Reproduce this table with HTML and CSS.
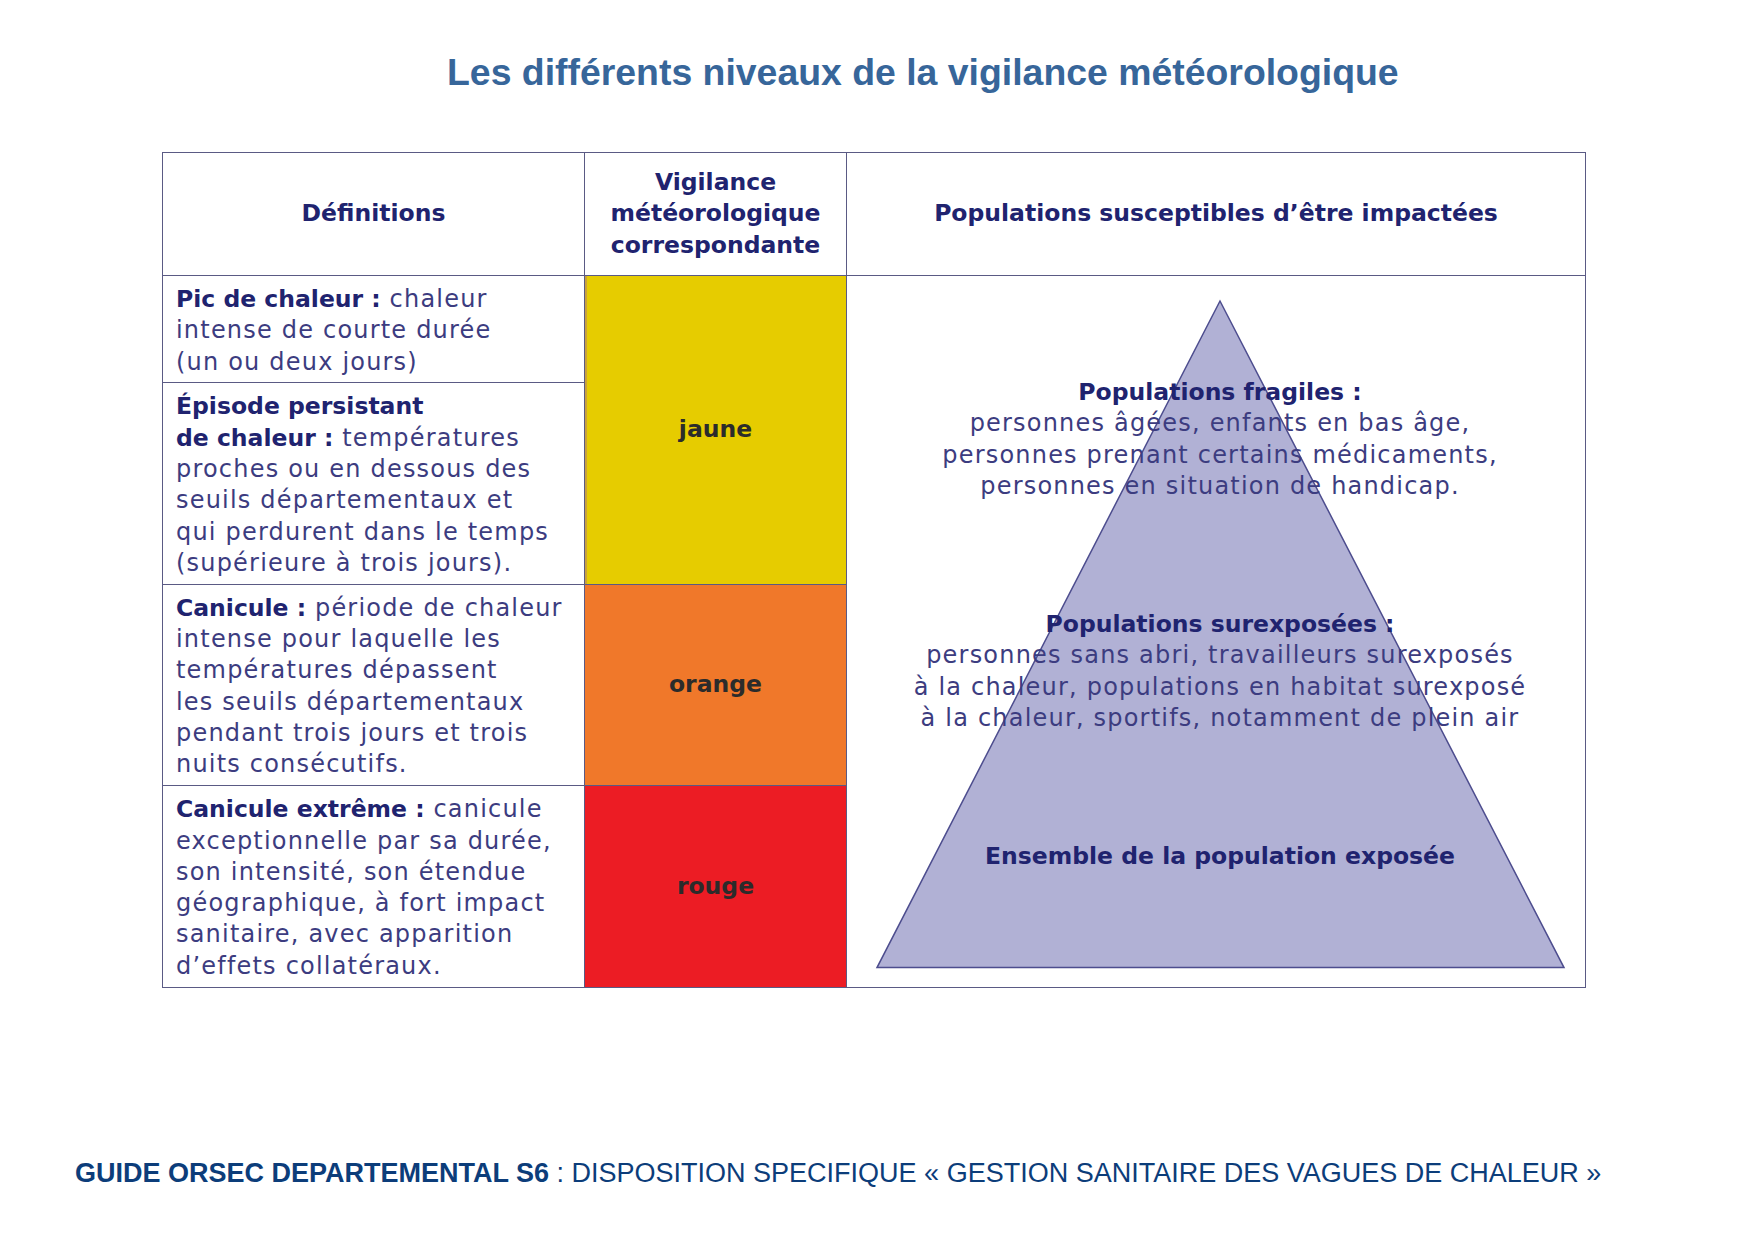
FILE: index.html
```html
<!DOCTYPE html>
<html lang="fr">
<head>
<meta charset="utf-8">
<title>Vigilance météorologique</title>
<link rel="stylesheet" href="styles.css">
</head>
<body>
<div class="page">
  <h1 class="title">Les différents niveaux de la vigilance météorologique</h1>

  <table class="vig">
    <colgroup>
      <col class="c-def">
      <col class="c-vig">
      <col class="c-pop">
    </colgroup>
    <thead>
      <tr>
        <th>Définitions</th>
        <th>Vigilance<br>météorologique<br>correspondante</th>
        <th>Populations susceptibles d’être impactées</th>
      </tr>
    </thead>
    <tbody>
      <tr>
        <td class="def"><b>Pic de chaleur :</b> chaleur<br>intense de courte durée<br>(un ou deux jours)</td>
        <td class="lvl jaune" rowspan="2">jaune</td>
        <td class="pyr" rowspan="4">
          <svg class="pyr-shape" viewBox="0 0 738 710" preserveAspectRatio="none" aria-hidden="true">
            <polygon points="373,25 30,691 717,691" />
          </svg>
          <div class="pyr-text">
            <p><b>Populations fragiles :</b><br>personnes âgées, enfants en bas âge,<br>personnes prenant certains médicaments,<br>personnes en situation de handicap.</p>
            <p><b>Populations surexposées :</b><br>personnes sans abri, travailleurs surexposés<br>à la chaleur, populations en habitat surexposé<br>à la chaleur, sportifs, notamment de plein air</p>
            <p><b>Ensemble de la population exposée</b></p>
          </div>
        </td>
      </tr>
      <tr>
        <td class="def"><b>Épisode persistant<br>de chaleur :</b> températures<br>proches ou en dessous des<br>seuils départementaux et<br>qui perdurent dans le temps<br>(supérieure à trois jours).</td>
      </tr>
      <tr>
        <td class="def"><b>Canicule :</b> période de chaleur<br>intense pour laquelle les<br>températures dépassent<br>les seuils départementaux<br>pendant trois jours et trois<br>nuits consécutifs.</td>
        <td class="lvl orange">orange</td>
      </tr>
      <tr>
        <td class="def"><b>Canicule extrême :</b> canicule<br>exceptionnelle par sa durée,<br>son intensité, son étendue<br>géographique, à fort impact<br>sanitaire, avec apparition<br>d’effets collatéraux.</td>
        <td class="lvl rouge">rouge</td>
      </tr>
    </tbody>
  </table>

  <p class="footer"><b>GUIDE ORSEC DEPARTEMENTAL S6</b> : DISPOSITION SPECIFIQUE « GESTION SANITAIRE DES VAGUES DE CHALEUR »</p>
</div>
</body>
</html>
```

FILE: styles.css
```css
html, body {
  margin: 0;
  padding: 0;
  background: #ffffff;
}

.page {
  width: 1755px;
  height: 1240px;
  display: flex;
  flex-direction: column;
  box-sizing: border-box;
}

.title {
  margin: 0;
  padding: 52px 0 0 447px;
  font-family: "Liberation Sans", Arial, sans-serif;
  font-weight: bold;
  font-size: 37.4px;
  line-height: 40px;
  color: #37669a;
  white-space: nowrap;
}

.vig {
  margin: 60px 0 0 162px;
  border-collapse: collapse;
  table-layout: fixed;
  width: 1423px;
  font-family: "DejaVu Sans", Verdana, sans-serif;
  font-size: 24px;
  letter-spacing: 1.2px;
  line-height: 31.3px;
  color: #3c3c80;
}

.c-def { width: 422px; }
.c-vig { width: 262px; }
.c-pop { width: 739px; }

.vig th,
.vig td {
  border: 1.5px solid #5a5a84;
  padding: 0;
  vertical-align: middle;
}

.vig th {
  height: 122px;
  font-size: 23.5px;
  letter-spacing: 0;
  font-weight: bold;
  color: #20236f;
  text-align: center;
}

.vig td.def {
  padding: 8px 10px 4.6px 13px;
  white-space: nowrap;
  vertical-align: top;
}

.vig b {
  font-size: 23.5px;
  letter-spacing: 0;
  font-weight: bold;
  color: #20236f;
}

.lvl {
  text-align: center;
  font-weight: bold;
  font-size: 23.5px;
  letter-spacing: 0;
  color: #2b2b2b;
}

.jaune { background: #e6cc00; box-shadow: inset 2px 0 0 #c9a23a; }
.orange { background: #f0782a; }
.rouge { background: #ec1c24; }

.vig td.pyr {
  position: relative;
  vertical-align: top;
}

.pyr-shape {
  position: absolute;
  left: 0;
  top: 0;
  width: 100%;
  height: 100%;
}

.pyr-shape polygon {
  fill: #b1b1d5;
  stroke: #4d4d8e;
  stroke-width: 1.5;
}

.pyr-text {
  position: relative;
  display: flex;
  flex-direction: column;
  gap: 107px;
  padding: 101px 0 0 8px;
  text-align: center;
  white-space: nowrap;
}

.pyr-text p {
  margin: 0;
}

.footer {
  margin: 170px 0 0 75px;
  font-family: "Liberation Sans", Arial, sans-serif;
  font-size: 27px;
  line-height: 30px;
  color: #0c3d7a;
  white-space: nowrap;
}

.footer b {
  font-weight: bold;
}
```
